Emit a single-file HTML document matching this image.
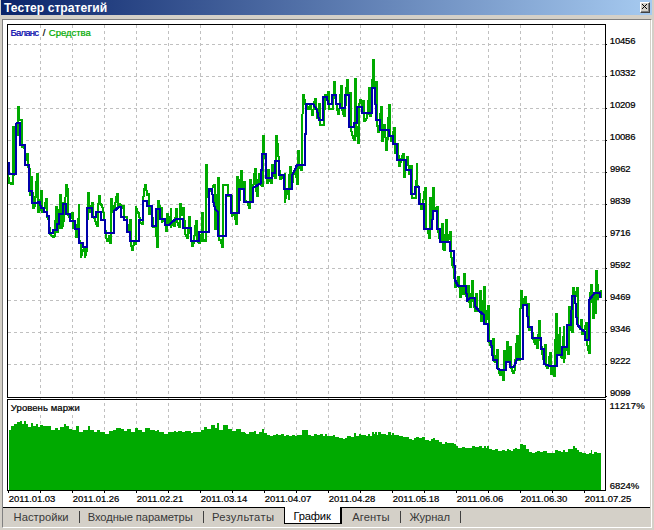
<!DOCTYPE html>
<html lang="ru"><head><meta charset="utf-8"><title>Тестер стратегий</title>
<style>
html,body{margin:0;padding:0}
body{width:654px;height:530px;background:#d4d0c8;position:relative;overflow:hidden;font-family:"Liberation Sans",sans-serif;font-size:11px;color:#000}
div{position:absolute;box-sizing:border-box}
.title{left:1px;top:0;width:651px;height:15px;background:linear-gradient(90deg,#0a246a,#a6caf0)}
.close{left:640px;top:2px;width:10px;height:11px;background:#d4d0c8;border-top:1px solid #fff;border-left:1px solid #fff;border-right:1px solid #404040;border-bottom:1px solid #404040;box-shadow:inset -1px -1px 0 #808080}
.client{left:2px;top:19px;width:650px;height:509px;border-top:1px solid #808080;border-left:1px solid #808080;border-right:1px solid #fff;border-bottom:1px solid #fff;background:#d4d0c8}
.white{left:3px;top:20px;width:647px;height:487px;background:#fff}
.bline{left:3px;top:507px;width:647px;height:1px;background:#000}
.t{white-space:nowrap;line-height:14px;height:14px}
.c{-webkit-text-stroke:0.22px}
.bg{background:#fff}
.sep{top:511px;width:1px;height:12px;background:#404040}
.atab{left:284px;top:507px;width:58px;height:17px;background:#fff;border-left:1px solid #000;border-bottom:1px solid #000;border-right:2px solid #000}
svg{position:absolute;left:0;top:0}
</style></head><body>
<div class="title"></div>
<div class="t" style="left:4.00px;top:0.81px;font-size:12.1px;letter-spacing:0.025px;color:#fff;font-weight:bold;">Тестер стратегий</div>
<div class="close"></div>
<div class="client"></div>
<div class="white"></div>
<div class="bline"></div>
<div class="atab"></div>
<div class="t" style="left:13.62px;top:510.12px;font-size:11.2px;letter-spacing:0.014px;color:#383838;">Настройки</div>
<div class="t" style="left:87.72px;top:510.12px;font-size:11.2px;letter-spacing:-0.097px;color:#383838;">Входные параметры</div>
<div class="t" style="left:211.88px;top:510.12px;font-size:11.2px;letter-spacing:0.349px;color:#383838;">Результаты</div>
<div class="t" style="left:293.43px;top:509.12px;font-size:11.2px;letter-spacing:-0.173px;color:#000;">График</div>
<div class="t" style="left:352.20px;top:510.12px;font-size:11.2px;letter-spacing:0.099px;color:#383838;">Агенты</div>
<div class="t" style="left:409.50px;top:510.12px;font-size:11.2px;letter-spacing:-0.082px;color:#383838;">Журнал</div>
<div class="sep" style="left:79px"></div>
<div class="sep" style="left:203px"></div>
<div class="sep" style="left:400px"></div>
<div class="sep" style="left:460px"></div>
<svg width="654" height="530" viewBox="0 0 654 530" shape-rendering="crispEdges">
<g stroke="#c0c0c0" stroke-width="1" stroke-dasharray="3 3" fill="none">
<line x1="40.5" y1="25" x2="40.5" y2="490"/>
<line x1="72.5" y1="25" x2="72.5" y2="490"/>
<line x1="104.5" y1="25" x2="104.5" y2="490"/>
<line x1="136.5" y1="25" x2="136.5" y2="490"/>
<line x1="168.5" y1="25" x2="168.5" y2="490"/>
<line x1="200.5" y1="25" x2="200.5" y2="490"/>
<line x1="232.5" y1="25" x2="232.5" y2="490"/>
<line x1="264.5" y1="25" x2="264.5" y2="490"/>
<line x1="296.5" y1="25" x2="296.5" y2="490"/>
<line x1="328.5" y1="25" x2="328.5" y2="490"/>
<line x1="360.5" y1="25" x2="360.5" y2="490"/>
<line x1="392.5" y1="25" x2="392.5" y2="490"/>
<line x1="424.5" y1="25" x2="424.5" y2="490"/>
<line x1="456.5" y1="25" x2="456.5" y2="490"/>
<line x1="488.5" y1="25" x2="488.5" y2="490"/>
<line x1="520.5" y1="25" x2="520.5" y2="490"/>
<line x1="552.5" y1="25" x2="552.5" y2="490"/>
<line x1="584.5" y1="25" x2="584.5" y2="490"/>
<line x1="8" y1="44.5" x2="605" y2="44.5"/>
<line x1="8" y1="76.5" x2="605" y2="76.5"/>
<line x1="8" y1="108.5" x2="605" y2="108.5"/>
<line x1="8" y1="140.5" x2="605" y2="140.5"/>
<line x1="8" y1="172.5" x2="605" y2="172.5"/>
<line x1="8" y1="204.5" x2="605" y2="204.5"/>
<line x1="8" y1="236.5" x2="605" y2="236.5"/>
<line x1="8" y1="268.5" x2="605" y2="268.5"/>
<line x1="8" y1="300.5" x2="605" y2="300.5"/>
<line x1="8" y1="332.5" x2="605" y2="332.5"/>
<line x1="8" y1="364.5" x2="605" y2="364.5"/>
</g>
<polygon points="9,490 9,430 11,430 11,426 14,426 14,424 17,424 17,422 20,422 20,421 22,421 22,424 24,424 24,421 26,421 26,424 28,424 28,427 31,427 31,423 33,423 33,426 36,426 36,424 38,424 38,427 40,427 40,425 43,425 43,426 51,426 51,430 55,430 55,428 58,428 58,430 60,430 60,427 64,427 64,424 66,424 66,426 69,426 69,429 72,429 72,430 76,430 76,426 79,426 79,432 83,432 83,430 88,430 88,426 90,426 90,430 94,430 94,432 97,432 97,430 100,430 100,432 105,432 105,434 109,434 109,431 113,431 113,430 116,430 116,428 121,428 121,429 124,429 124,431 127,431 127,429 131,429 131,432 135,432 135,428 138,428 138,430 142,430 142,432 145,432 145,428 150,428 150,430 155,430 155,431 157,431 157,430 159,430 159,432 164,432 164,434 168,434 168,432 174,432 174,431 176,431 176,432 178,432 178,431 182,431 182,432 185,432 185,431 191,431 191,433 193,433 193,432 201,432 201,430 204,430 204,427 207,427 207,429 211,429 211,425 215,425 215,428 217,428 217,423 219,423 219,430 223,430 223,425 228,425 228,429 232,429 232,431 236,431 236,429 241,429 241,432 245,432 245,433 246,433 246,434 249,434 249,432 254,432 254,431 256,431 256,434 259,434 259,432 262,432 262,429 264,429 264,433 267,433 267,435 270,435 270,436 273,436 273,435 276,435 276,434 278,434 278,435 281,435 281,434 284,434 284,436 286,436 286,435 289,435 289,436 292,436 292,435 295,435 295,436 297,436 297,435 302,435 302,430 308,430 308,435 311,435 311,436 314,436 314,434 317,434 317,435 320,435 320,434 323,434 323,436 325,436 325,434 327,434 327,436 330,436 330,436 333,436 333,435 335,435 335,437 339,437 339,438 343,438 343,439 345,439 345,438 347,438 347,436 351,436 351,437 354,437 354,433 356,433 356,436 359,436 359,434 361,434 361,435 364,435 364,435 366,435 366,436 368,436 368,434 370,434 370,436 372,436 372,432 374,432 374,434 375,434 375,432 377,432 377,435 378,435 378,432 381,432 381,434 386,434 386,435 388,435 388,432 391,432 391,435 392,435 392,433 394,433 394,435 399,435 399,436 403,436 403,437 409,437 409,439 412,439 412,440 414,440 414,438 416,438 416,437 419,437 419,438 422,438 422,437 425,437 425,440 429,440 429,441 431,441 431,439 433,439 433,438 435,438 435,440 439,440 439,442 442,442 442,444 445,444 445,442 447,442 447,443 451,443 451,443 454,443 454,444 456,444 456,446 458,446 458,448 462,448 462,447 465,447 465,448 472,448 472,446 475,446 475,447 479,447 479,446 482,446 482,448 484,448 484,446 486,446 486,448 487,448 487,446 489,446 489,449 492,449 492,450 495,450 495,449 498,449 498,451 502,451 502,450 505,450 505,451 507,451 507,449 509,449 509,450 511,450 511,451 513,451 513,449 515,449 515,448 517,448 517,449 520,449 520,444 523,444 523,445 526,445 526,449 529,449 529,452 532,452 532,453 535,453 535,452 537,452 537,451 540,451 540,452 543,452 543,451 545,451 545,451 547,451 547,453 552,453 552,453 555,453 555,450 558,450 558,451 561,451 561,452 563,452 563,450 565,450 565,452 568,452 568,449 571,449 571,449 573,449 573,446 575,446 575,448 577,448 577,450 579,450 579,452 582,452 582,453 586,453 586,454 589,454 589,453 591,453 591,450 592,450 592,454 594,454 594,452 597,452 597,453 601,453 601,490" fill="#00aa00"/>
<g fill="none" stroke="#00aa00" stroke-width="1" stroke-linecap="square">
<polyline transform="translate(-0.5,-0.5)" points="8,172 9,183 13,184 13,127 14,127 14,175 14,127 16,127 18,135 18,107 19,107 19,120 22,120 22,147 25,148 26,160 27,160 27,154 28,154 28,166 30,170 30,195 32,195 32,177 33,208 34,208 35,205 37,174 38,174 38,212 39,212 40,208 41,191 42,191 42,212 44,212 46,199 47,199 47,216 49,220 50,234 53,237 54,237 55,235 56,207 57,207 57,232 58,232 59,225 60,195 61,195 61,228 62,228 63,203 63,226 65,210 66,185 67,185 68,192 68,215 70,218 71,218 72,213 73,213 73,228 74,228 75,225 76,225 76,237 77,237 78,232 79,205 79,240 81,243 81,257 83,250 85,247 85,257 87,250 88,193 89,193 89,212 90,212 92,203 93,203 93,215 95,220 97,226 98,226 98,212 99,196 100,196 100,204 102,205 104,215 106,235 107,241 108,241 109,236 110,236 110,243 111,243 111,199 112,199 113,212 114,212 115,206 117,194 118,194 118,206 119,206 119,204 120,204 122,208 123,208 123,206 124,206 124,217 127,217 128,232 129,232 130,220 131,220 131,242 132,250 133,250 134,242 135,242 136,244 136,207 138,213 139,213 140,222 142,224 143,224 143,200 145,185 146,185 147,195 148,195 148,194 149,194 149,214 150,214 151,207 152,207 153,227 154,227 155,226 156,226 157,247 158,247 158,201 159,201 160,210 161,210 162,208 162,222 164,220 165,220 166,231 167,231 167,214 168,214 169,224 170,224 171,209 171,227 173,222 174,222 174,226 175,226 176,209 177,209 177,221 179,227 180,227 180,204 181,204 182,215 183,215 183,208 184,208 185,233 187,238 188,238 189,217 190,217 190,229 192,246 193,246 194,241 196,221 197,221 197,240 199,243 200,243 200,235 201,235 201,241 202,241 202,213 203,213 203,240 205,241 206,241 206,165 207,165 207,197 208,197 209,192 212,188 214,185 215,185 215,229 216,229 217,212 218,178 219,178 219,208 219,240 221,240 222,247 223,247 223,216 223,185 228,185 228,196 232,196 232,216 234,214 235,214 236,224 237,224 237,177 238,177 238,213 239,213 240,189 241,171 242,171 242,189 243,189 244,182 245,182 245,200 248,203 249,208 250,208 250,180 251,180 251,202 252,202 253,190 255,169 256,169 256,186 257,196 258,196 258,186 259,174 260,174 260,184 262,186 263,186 263,136 264,136 264,154 266,160 267,183 268,183 268,170 269,170 269,178 271,183 272,183 272,165 273,165 273,173 275,178 276,178 276,136 277,136 278,150 279,162 280,179 281,179 283,176 285,174 285,202 287,190 288,190 289,199 289,183 290,167 291,167 291,189 292,189 293,176 295,170 296,170 297,184 298,184 298,151 299,151 299,165 301,170 302,170 302,165 302,134 303,95 304,95 305,103 308,109 309,109 310,104 311,104 312,115 313,115 314,104 315,99 316,99 317,118 318,118 319,104 320,104 320,125 324,125 325,95 326,95 327,97 328,97 328,92 329,92 329,109 333,109 334,82 335,82 335,95 338,114 339,114 340,104 341,86 342,86 342,108 344,116 345,116 346,95 347,80 348,80 348,95 349,95 350,93 351,93 351,130 354,140 355,140 355,79 356,79 356,123 357,130 358,143 359,143 359,107 360,100 361,100 362,107 363,107 363,101 364,101 364,121 365,121 366,120 368,113 369,88 370,88 370,116 371,116 372,100 373,60 374,60 374,88 375,88 376,82 377,82 377,120 378,132 379,132 380,120 381,107 382,107 382,141 383,141 384,125 385,125 386,150 387,150 388,130 389,105 390,105 390,130 391,141 392,141 393,136 394,128 395,128 395,153 396,153 397,144 398,144 398,145 399,166 400,166 401,160 403,154 404,154 404,177 405,177 406,165 407,157 408,157 409,174 410,174 410,170 411,166 412,166 412,198 416,198 417,164 417,185 419,188 421,209 422,209 423,204 425,188 426,188 426,229 428,229 429,238 430,238 430,198 431,198 431,228 432,228 433,188 434,188 434,211 435,211 437,207 438,207 438,229 440,242 441,242 442,224 443,224 443,249 444,250 445,250 446,220 447,220 447,242 448,242 450,232 451,232 451,250 452,264 454,269 455,287 456,287 457,286 458,277 459,277 460,297 461,297 461,286 462,286 463,294 464,294 464,274 465,274 465,286 467,300 468,300 468,286 469,286 469,298 470,307 471,307 472,281 473,281 473,298 475,311 476,311 476,294 477,294 477,310 479,311 480,311 480,291 481,291 481,321 482,321 483,315 484,287 485,287 485,324 486,324 488,306 489,306 489,341 491,347 492,347 493,339 494,339 494,360 495,362 496,362 497,350 498,350 498,368 500,375 501,375 501,370 502,370 503,380 504,380 504,351 505,351 505,370 506,370 507,342 508,342 508,362 509,362 510,347 511,347 511,367 513,373 514,373 515,368 517,336 518,336 518,359 519,360 520,360 520,327 521,291 522,291 523,305 524,305 525,297 526,297 526,305 527,305 528,304 529,304 529,330 530,330 531,327 532,327 533,338 535,344 536,344 536,338 537,338 537,348 538,348 539,321 540,321 540,338 542,349 543,359 544,359 545,345 546,345 546,364 547,368 548,368 550,353 551,353 551,374 552,374 552,366 553,366 554,376 555,376 555,366 556,314 557,314 557,355 558,355 560,328 560,355 562,358 563,358 563,347 564,327 564,362 566,347 567,347 568,354 569,354 569,307 570,307 570,325 572,332 573,332 573,288 574,288 575,296 576,296 577,288 578,288 578,324 580,329 581,329 581,320 582,320 582,334 583,334 584,332 586,323 587,323 587,343 589,353 590,353 590,300 591,285 592,285 593,318 594,318 594,294 595,294 595,313 596,313 596,271 597,271 597,293 598,293 598,284 598,299 600,293 601,291 601,297"/>
<polyline transform="translate(-0.5,0.5)" points="8,172 9,183 13,184 13,127 14,127 14,175 14,127 16,127 18,135 18,107 19,107 19,120 22,120 22,147 25,148 26,160 27,160 27,154 28,154 28,166 30,170 30,195 32,195 32,177 33,208 34,208 35,205 37,174 38,174 38,212 39,212 40,208 41,191 42,191 42,212 44,212 46,199 47,199 47,216 49,220 50,234 53,237 54,237 55,235 56,207 57,207 57,232 58,232 59,225 60,195 61,195 61,228 62,228 63,203 63,226 65,210 66,185 67,185 68,192 68,215 70,218 71,218 72,213 73,213 73,228 74,228 75,225 76,225 76,237 77,237 78,232 79,205 79,240 81,243 81,257 83,250 85,247 85,257 87,250 88,193 89,193 89,212 90,212 92,203 93,203 93,215 95,220 97,226 98,226 98,212 99,196 100,196 100,204 102,205 104,215 106,235 107,241 108,241 109,236 110,236 110,243 111,243 111,199 112,199 113,212 114,212 115,206 117,194 118,194 118,206 119,206 119,204 120,204 122,208 123,208 123,206 124,206 124,217 127,217 128,232 129,232 130,220 131,220 131,242 132,250 133,250 134,242 135,242 136,244 136,207 138,213 139,213 140,222 142,224 143,224 143,200 145,185 146,185 147,195 148,195 148,194 149,194 149,214 150,214 151,207 152,207 153,227 154,227 155,226 156,226 157,247 158,247 158,201 159,201 160,210 161,210 162,208 162,222 164,220 165,220 166,231 167,231 167,214 168,214 169,224 170,224 171,209 171,227 173,222 174,222 174,226 175,226 176,209 177,209 177,221 179,227 180,227 180,204 181,204 182,215 183,215 183,208 184,208 185,233 187,238 188,238 189,217 190,217 190,229 192,246 193,246 194,241 196,221 197,221 197,240 199,243 200,243 200,235 201,235 201,241 202,241 202,213 203,213 203,240 205,241 206,241 206,165 207,165 207,197 208,197 209,192 212,188 214,185 215,185 215,229 216,229 217,212 218,178 219,178 219,208 219,240 221,240 222,247 223,247 223,216 223,185 228,185 228,196 232,196 232,216 234,214 235,214 236,224 237,224 237,177 238,177 238,213 239,213 240,189 241,171 242,171 242,189 243,189 244,182 245,182 245,200 248,203 249,208 250,208 250,180 251,180 251,202 252,202 253,190 255,169 256,169 256,186 257,196 258,196 258,186 259,174 260,174 260,184 262,186 263,186 263,136 264,136 264,154 266,160 267,183 268,183 268,170 269,170 269,178 271,183 272,183 272,165 273,165 273,173 275,178 276,178 276,136 277,136 278,150 279,162 280,179 281,179 283,176 285,174 285,202 287,190 288,190 289,199 289,183 290,167 291,167 291,189 292,189 293,176 295,170 296,170 297,184 298,184 298,151 299,151 299,165 301,170 302,170 302,165 302,134 303,95 304,95 305,103 308,109 309,109 310,104 311,104 312,115 313,115 314,104 315,99 316,99 317,118 318,118 319,104 320,104 320,125 324,125 325,95 326,95 327,97 328,97 328,92 329,92 329,109 333,109 334,82 335,82 335,95 338,114 339,114 340,104 341,86 342,86 342,108 344,116 345,116 346,95 347,80 348,80 348,95 349,95 350,93 351,93 351,130 354,140 355,140 355,79 356,79 356,123 357,130 358,143 359,143 359,107 360,100 361,100 362,107 363,107 363,101 364,101 364,121 365,121 366,120 368,113 369,88 370,88 370,116 371,116 372,100 373,60 374,60 374,88 375,88 376,82 377,82 377,120 378,132 379,132 380,120 381,107 382,107 382,141 383,141 384,125 385,125 386,150 387,150 388,130 389,105 390,105 390,130 391,141 392,141 393,136 394,128 395,128 395,153 396,153 397,144 398,144 398,145 399,166 400,166 401,160 403,154 404,154 404,177 405,177 406,165 407,157 408,157 409,174 410,174 410,170 411,166 412,166 412,198 416,198 417,164 417,185 419,188 421,209 422,209 423,204 425,188 426,188 426,229 428,229 429,238 430,238 430,198 431,198 431,228 432,228 433,188 434,188 434,211 435,211 437,207 438,207 438,229 440,242 441,242 442,224 443,224 443,249 444,250 445,250 446,220 447,220 447,242 448,242 450,232 451,232 451,250 452,264 454,269 455,287 456,287 457,286 458,277 459,277 460,297 461,297 461,286 462,286 463,294 464,294 464,274 465,274 465,286 467,300 468,300 468,286 469,286 469,298 470,307 471,307 472,281 473,281 473,298 475,311 476,311 476,294 477,294 477,310 479,311 480,311 480,291 481,291 481,321 482,321 483,315 484,287 485,287 485,324 486,324 488,306 489,306 489,341 491,347 492,347 493,339 494,339 494,360 495,362 496,362 497,350 498,350 498,368 500,375 501,375 501,370 502,370 503,380 504,380 504,351 505,351 505,370 506,370 507,342 508,342 508,362 509,362 510,347 511,347 511,367 513,373 514,373 515,368 517,336 518,336 518,359 519,360 520,360 520,327 521,291 522,291 523,305 524,305 525,297 526,297 526,305 527,305 528,304 529,304 529,330 530,330 531,327 532,327 533,338 535,344 536,344 536,338 537,338 537,348 538,348 539,321 540,321 540,338 542,349 543,359 544,359 545,345 546,345 546,364 547,368 548,368 550,353 551,353 551,374 552,374 552,366 553,366 554,376 555,376 555,366 556,314 557,314 557,355 558,355 560,328 560,355 562,358 563,358 563,347 564,327 564,362 566,347 567,347 568,354 569,354 569,307 570,307 570,325 572,332 573,332 573,288 574,288 575,296 576,296 577,288 578,288 578,324 580,329 581,329 581,320 582,320 582,334 583,334 584,332 586,323 587,323 587,343 589,353 590,353 590,300 591,285 592,285 593,318 594,318 594,294 595,294 595,313 596,313 596,271 597,271 597,293 598,293 598,284 598,299 600,293 601,291 601,297"/>
<polyline transform="translate(0.5,-0.5)" points="8,172 9,183 13,184 13,127 14,127 14,175 14,127 16,127 18,135 18,107 19,107 19,120 22,120 22,147 25,148 26,160 27,160 27,154 28,154 28,166 30,170 30,195 32,195 32,177 33,208 34,208 35,205 37,174 38,174 38,212 39,212 40,208 41,191 42,191 42,212 44,212 46,199 47,199 47,216 49,220 50,234 53,237 54,237 55,235 56,207 57,207 57,232 58,232 59,225 60,195 61,195 61,228 62,228 63,203 63,226 65,210 66,185 67,185 68,192 68,215 70,218 71,218 72,213 73,213 73,228 74,228 75,225 76,225 76,237 77,237 78,232 79,205 79,240 81,243 81,257 83,250 85,247 85,257 87,250 88,193 89,193 89,212 90,212 92,203 93,203 93,215 95,220 97,226 98,226 98,212 99,196 100,196 100,204 102,205 104,215 106,235 107,241 108,241 109,236 110,236 110,243 111,243 111,199 112,199 113,212 114,212 115,206 117,194 118,194 118,206 119,206 119,204 120,204 122,208 123,208 123,206 124,206 124,217 127,217 128,232 129,232 130,220 131,220 131,242 132,250 133,250 134,242 135,242 136,244 136,207 138,213 139,213 140,222 142,224 143,224 143,200 145,185 146,185 147,195 148,195 148,194 149,194 149,214 150,214 151,207 152,207 153,227 154,227 155,226 156,226 157,247 158,247 158,201 159,201 160,210 161,210 162,208 162,222 164,220 165,220 166,231 167,231 167,214 168,214 169,224 170,224 171,209 171,227 173,222 174,222 174,226 175,226 176,209 177,209 177,221 179,227 180,227 180,204 181,204 182,215 183,215 183,208 184,208 185,233 187,238 188,238 189,217 190,217 190,229 192,246 193,246 194,241 196,221 197,221 197,240 199,243 200,243 200,235 201,235 201,241 202,241 202,213 203,213 203,240 205,241 206,241 206,165 207,165 207,197 208,197 209,192 212,188 214,185 215,185 215,229 216,229 217,212 218,178 219,178 219,208 219,240 221,240 222,247 223,247 223,216 223,185 228,185 228,196 232,196 232,216 234,214 235,214 236,224 237,224 237,177 238,177 238,213 239,213 240,189 241,171 242,171 242,189 243,189 244,182 245,182 245,200 248,203 249,208 250,208 250,180 251,180 251,202 252,202 253,190 255,169 256,169 256,186 257,196 258,196 258,186 259,174 260,174 260,184 262,186 263,186 263,136 264,136 264,154 266,160 267,183 268,183 268,170 269,170 269,178 271,183 272,183 272,165 273,165 273,173 275,178 276,178 276,136 277,136 278,150 279,162 280,179 281,179 283,176 285,174 285,202 287,190 288,190 289,199 289,183 290,167 291,167 291,189 292,189 293,176 295,170 296,170 297,184 298,184 298,151 299,151 299,165 301,170 302,170 302,165 302,134 303,95 304,95 305,103 308,109 309,109 310,104 311,104 312,115 313,115 314,104 315,99 316,99 317,118 318,118 319,104 320,104 320,125 324,125 325,95 326,95 327,97 328,97 328,92 329,92 329,109 333,109 334,82 335,82 335,95 338,114 339,114 340,104 341,86 342,86 342,108 344,116 345,116 346,95 347,80 348,80 348,95 349,95 350,93 351,93 351,130 354,140 355,140 355,79 356,79 356,123 357,130 358,143 359,143 359,107 360,100 361,100 362,107 363,107 363,101 364,101 364,121 365,121 366,120 368,113 369,88 370,88 370,116 371,116 372,100 373,60 374,60 374,88 375,88 376,82 377,82 377,120 378,132 379,132 380,120 381,107 382,107 382,141 383,141 384,125 385,125 386,150 387,150 388,130 389,105 390,105 390,130 391,141 392,141 393,136 394,128 395,128 395,153 396,153 397,144 398,144 398,145 399,166 400,166 401,160 403,154 404,154 404,177 405,177 406,165 407,157 408,157 409,174 410,174 410,170 411,166 412,166 412,198 416,198 417,164 417,185 419,188 421,209 422,209 423,204 425,188 426,188 426,229 428,229 429,238 430,238 430,198 431,198 431,228 432,228 433,188 434,188 434,211 435,211 437,207 438,207 438,229 440,242 441,242 442,224 443,224 443,249 444,250 445,250 446,220 447,220 447,242 448,242 450,232 451,232 451,250 452,264 454,269 455,287 456,287 457,286 458,277 459,277 460,297 461,297 461,286 462,286 463,294 464,294 464,274 465,274 465,286 467,300 468,300 468,286 469,286 469,298 470,307 471,307 472,281 473,281 473,298 475,311 476,311 476,294 477,294 477,310 479,311 480,311 480,291 481,291 481,321 482,321 483,315 484,287 485,287 485,324 486,324 488,306 489,306 489,341 491,347 492,347 493,339 494,339 494,360 495,362 496,362 497,350 498,350 498,368 500,375 501,375 501,370 502,370 503,380 504,380 504,351 505,351 505,370 506,370 507,342 508,342 508,362 509,362 510,347 511,347 511,367 513,373 514,373 515,368 517,336 518,336 518,359 519,360 520,360 520,327 521,291 522,291 523,305 524,305 525,297 526,297 526,305 527,305 528,304 529,304 529,330 530,330 531,327 532,327 533,338 535,344 536,344 536,338 537,338 537,348 538,348 539,321 540,321 540,338 542,349 543,359 544,359 545,345 546,345 546,364 547,368 548,368 550,353 551,353 551,374 552,374 552,366 553,366 554,376 555,376 555,366 556,314 557,314 557,355 558,355 560,328 560,355 562,358 563,358 563,347 564,327 564,362 566,347 567,347 568,354 569,354 569,307 570,307 570,325 572,332 573,332 573,288 574,288 575,296 576,296 577,288 578,288 578,324 580,329 581,329 581,320 582,320 582,334 583,334 584,332 586,323 587,323 587,343 589,353 590,353 590,300 591,285 592,285 593,318 594,318 594,294 595,294 595,313 596,313 596,271 597,271 597,293 598,293 598,284 598,299 600,293 601,291 601,297"/>
<polyline transform="translate(0.5,0.5)" points="8,172 9,183 13,184 13,127 14,127 14,175 14,127 16,127 18,135 18,107 19,107 19,120 22,120 22,147 25,148 26,160 27,160 27,154 28,154 28,166 30,170 30,195 32,195 32,177 33,208 34,208 35,205 37,174 38,174 38,212 39,212 40,208 41,191 42,191 42,212 44,212 46,199 47,199 47,216 49,220 50,234 53,237 54,237 55,235 56,207 57,207 57,232 58,232 59,225 60,195 61,195 61,228 62,228 63,203 63,226 65,210 66,185 67,185 68,192 68,215 70,218 71,218 72,213 73,213 73,228 74,228 75,225 76,225 76,237 77,237 78,232 79,205 79,240 81,243 81,257 83,250 85,247 85,257 87,250 88,193 89,193 89,212 90,212 92,203 93,203 93,215 95,220 97,226 98,226 98,212 99,196 100,196 100,204 102,205 104,215 106,235 107,241 108,241 109,236 110,236 110,243 111,243 111,199 112,199 113,212 114,212 115,206 117,194 118,194 118,206 119,206 119,204 120,204 122,208 123,208 123,206 124,206 124,217 127,217 128,232 129,232 130,220 131,220 131,242 132,250 133,250 134,242 135,242 136,244 136,207 138,213 139,213 140,222 142,224 143,224 143,200 145,185 146,185 147,195 148,195 148,194 149,194 149,214 150,214 151,207 152,207 153,227 154,227 155,226 156,226 157,247 158,247 158,201 159,201 160,210 161,210 162,208 162,222 164,220 165,220 166,231 167,231 167,214 168,214 169,224 170,224 171,209 171,227 173,222 174,222 174,226 175,226 176,209 177,209 177,221 179,227 180,227 180,204 181,204 182,215 183,215 183,208 184,208 185,233 187,238 188,238 189,217 190,217 190,229 192,246 193,246 194,241 196,221 197,221 197,240 199,243 200,243 200,235 201,235 201,241 202,241 202,213 203,213 203,240 205,241 206,241 206,165 207,165 207,197 208,197 209,192 212,188 214,185 215,185 215,229 216,229 217,212 218,178 219,178 219,208 219,240 221,240 222,247 223,247 223,216 223,185 228,185 228,196 232,196 232,216 234,214 235,214 236,224 237,224 237,177 238,177 238,213 239,213 240,189 241,171 242,171 242,189 243,189 244,182 245,182 245,200 248,203 249,208 250,208 250,180 251,180 251,202 252,202 253,190 255,169 256,169 256,186 257,196 258,196 258,186 259,174 260,174 260,184 262,186 263,186 263,136 264,136 264,154 266,160 267,183 268,183 268,170 269,170 269,178 271,183 272,183 272,165 273,165 273,173 275,178 276,178 276,136 277,136 278,150 279,162 280,179 281,179 283,176 285,174 285,202 287,190 288,190 289,199 289,183 290,167 291,167 291,189 292,189 293,176 295,170 296,170 297,184 298,184 298,151 299,151 299,165 301,170 302,170 302,165 302,134 303,95 304,95 305,103 308,109 309,109 310,104 311,104 312,115 313,115 314,104 315,99 316,99 317,118 318,118 319,104 320,104 320,125 324,125 325,95 326,95 327,97 328,97 328,92 329,92 329,109 333,109 334,82 335,82 335,95 338,114 339,114 340,104 341,86 342,86 342,108 344,116 345,116 346,95 347,80 348,80 348,95 349,95 350,93 351,93 351,130 354,140 355,140 355,79 356,79 356,123 357,130 358,143 359,143 359,107 360,100 361,100 362,107 363,107 363,101 364,101 364,121 365,121 366,120 368,113 369,88 370,88 370,116 371,116 372,100 373,60 374,60 374,88 375,88 376,82 377,82 377,120 378,132 379,132 380,120 381,107 382,107 382,141 383,141 384,125 385,125 386,150 387,150 388,130 389,105 390,105 390,130 391,141 392,141 393,136 394,128 395,128 395,153 396,153 397,144 398,144 398,145 399,166 400,166 401,160 403,154 404,154 404,177 405,177 406,165 407,157 408,157 409,174 410,174 410,170 411,166 412,166 412,198 416,198 417,164 417,185 419,188 421,209 422,209 423,204 425,188 426,188 426,229 428,229 429,238 430,238 430,198 431,198 431,228 432,228 433,188 434,188 434,211 435,211 437,207 438,207 438,229 440,242 441,242 442,224 443,224 443,249 444,250 445,250 446,220 447,220 447,242 448,242 450,232 451,232 451,250 452,264 454,269 455,287 456,287 457,286 458,277 459,277 460,297 461,297 461,286 462,286 463,294 464,294 464,274 465,274 465,286 467,300 468,300 468,286 469,286 469,298 470,307 471,307 472,281 473,281 473,298 475,311 476,311 476,294 477,294 477,310 479,311 480,311 480,291 481,291 481,321 482,321 483,315 484,287 485,287 485,324 486,324 488,306 489,306 489,341 491,347 492,347 493,339 494,339 494,360 495,362 496,362 497,350 498,350 498,368 500,375 501,375 501,370 502,370 503,380 504,380 504,351 505,351 505,370 506,370 507,342 508,342 508,362 509,362 510,347 511,347 511,367 513,373 514,373 515,368 517,336 518,336 518,359 519,360 520,360 520,327 521,291 522,291 523,305 524,305 525,297 526,297 526,305 527,305 528,304 529,304 529,330 530,330 531,327 532,327 533,338 535,344 536,344 536,338 537,338 537,348 538,348 539,321 540,321 540,338 542,349 543,359 544,359 545,345 546,345 546,364 547,368 548,368 550,353 551,353 551,374 552,374 552,366 553,366 554,376 555,376 555,366 556,314 557,314 557,355 558,355 560,328 560,355 562,358 563,358 563,347 564,327 564,362 566,347 567,347 568,354 569,354 569,307 570,307 570,325 572,332 573,332 573,288 574,288 575,296 576,296 577,288 578,288 578,324 580,329 581,329 581,320 582,320 582,334 583,334 584,332 586,323 587,323 587,343 589,353 590,353 590,300 591,285 592,285 593,318 594,318 594,294 595,294 595,313 596,313 596,271 597,271 597,293 598,293 598,284 598,299 600,293 601,291 601,297"/>
</g>
<g fill="none" stroke="#0000aa" stroke-width="1" stroke-linecap="square">
<polyline transform="translate(-0.5,-0.5)" points="8,163 9,163 9,174 16,174 16,124 17,123 20,123 20,145 25,145 25,165 29,165 29,191 32,191 32,203 38,203 38,202 40,202 41,208 44,208 44,212 47,212 47,216 49,216 49,233 53,233 53,230 57,230 57,224 59,224 59,214 63,214 63,204 66,204 66,214 70,214 70,221 75,221 75,229 79,229 79,243 83,243 83,247 87,247 87,208 92,208 92,217 96,217 96,212 101,212 101,220 105,220 105,233 114,233 114,211 119,207 121,207 121,217 124,217 124,220 127,220 127,232 130,232 130,241 139,241 139,220 143,220 143,201 147,201 147,206 152,206 152,226 156,226 156,209 160,209 160,219 165,219 165,225 169,225 172,222 176,219 183,219 183,228 191,228 191,241 199,241 199,232 209,232 209,189 212,189 213,200 215,209 218,212 218,236 226,236 226,195 231,195 231,213 239,213 239,189 244,189 244,202 253,202 253,188 261,183 261,170 262,170 262,154 266,154 266,178 272,178 272,173 275,173 275,161 279,161 279,175 284,175 284,189 292,189 292,176 297,165 305,165 305,134 306,134 306,104 313,104 317,110 319,120 323,120 323,97 327,97 328,104 332,104 332,95 336,95 336,104 340,104 340,108 345,108 345,95 349,95 349,127 354,127 354,123 357,123 357,107 362,107 362,113 372,113 372,88 375,88 376,120 380,120 380,130 389,130 389,136 393,136 393,144 397,144 397,160 406,160 406,170 411,170 411,194 415,194 415,187 419,187 419,204 424,204 424,229 432,229 433,211 437,211 437,229 440,229 440,242 450,242 450,251 454,251 455,280 458,286 466,286 467,301 470,298 475,298 475,306 479,311 484,315 484,324 488,324 488,341 491,341 493,360 497,360 497,368 500,370 506,370 506,362 510,362 510,367 514,367 517,359 523,359 523,305 527,305 528,327 532,327 532,338 541,338 541,349 544,349 544,364 550,366 557,366 557,355 562,355 562,347 567,347 567,325 571,325 572,296 575,296 577,324 581,329 585,332 585,340 589,340 589,300 594,294 594,293 600,293 600,297"/>
<polyline transform="translate(-0.5,0.5)" points="8,163 9,163 9,174 16,174 16,124 17,123 20,123 20,145 25,145 25,165 29,165 29,191 32,191 32,203 38,203 38,202 40,202 41,208 44,208 44,212 47,212 47,216 49,216 49,233 53,233 53,230 57,230 57,224 59,224 59,214 63,214 63,204 66,204 66,214 70,214 70,221 75,221 75,229 79,229 79,243 83,243 83,247 87,247 87,208 92,208 92,217 96,217 96,212 101,212 101,220 105,220 105,233 114,233 114,211 119,207 121,207 121,217 124,217 124,220 127,220 127,232 130,232 130,241 139,241 139,220 143,220 143,201 147,201 147,206 152,206 152,226 156,226 156,209 160,209 160,219 165,219 165,225 169,225 172,222 176,219 183,219 183,228 191,228 191,241 199,241 199,232 209,232 209,189 212,189 213,200 215,209 218,212 218,236 226,236 226,195 231,195 231,213 239,213 239,189 244,189 244,202 253,202 253,188 261,183 261,170 262,170 262,154 266,154 266,178 272,178 272,173 275,173 275,161 279,161 279,175 284,175 284,189 292,189 292,176 297,165 305,165 305,134 306,134 306,104 313,104 317,110 319,120 323,120 323,97 327,97 328,104 332,104 332,95 336,95 336,104 340,104 340,108 345,108 345,95 349,95 349,127 354,127 354,123 357,123 357,107 362,107 362,113 372,113 372,88 375,88 376,120 380,120 380,130 389,130 389,136 393,136 393,144 397,144 397,160 406,160 406,170 411,170 411,194 415,194 415,187 419,187 419,204 424,204 424,229 432,229 433,211 437,211 437,229 440,229 440,242 450,242 450,251 454,251 455,280 458,286 466,286 467,301 470,298 475,298 475,306 479,311 484,315 484,324 488,324 488,341 491,341 493,360 497,360 497,368 500,370 506,370 506,362 510,362 510,367 514,367 517,359 523,359 523,305 527,305 528,327 532,327 532,338 541,338 541,349 544,349 544,364 550,366 557,366 557,355 562,355 562,347 567,347 567,325 571,325 572,296 575,296 577,324 581,329 585,332 585,340 589,340 589,300 594,294 594,293 600,293 600,297"/>
<polyline transform="translate(0.5,-0.5)" points="8,163 9,163 9,174 16,174 16,124 17,123 20,123 20,145 25,145 25,165 29,165 29,191 32,191 32,203 38,203 38,202 40,202 41,208 44,208 44,212 47,212 47,216 49,216 49,233 53,233 53,230 57,230 57,224 59,224 59,214 63,214 63,204 66,204 66,214 70,214 70,221 75,221 75,229 79,229 79,243 83,243 83,247 87,247 87,208 92,208 92,217 96,217 96,212 101,212 101,220 105,220 105,233 114,233 114,211 119,207 121,207 121,217 124,217 124,220 127,220 127,232 130,232 130,241 139,241 139,220 143,220 143,201 147,201 147,206 152,206 152,226 156,226 156,209 160,209 160,219 165,219 165,225 169,225 172,222 176,219 183,219 183,228 191,228 191,241 199,241 199,232 209,232 209,189 212,189 213,200 215,209 218,212 218,236 226,236 226,195 231,195 231,213 239,213 239,189 244,189 244,202 253,202 253,188 261,183 261,170 262,170 262,154 266,154 266,178 272,178 272,173 275,173 275,161 279,161 279,175 284,175 284,189 292,189 292,176 297,165 305,165 305,134 306,134 306,104 313,104 317,110 319,120 323,120 323,97 327,97 328,104 332,104 332,95 336,95 336,104 340,104 340,108 345,108 345,95 349,95 349,127 354,127 354,123 357,123 357,107 362,107 362,113 372,113 372,88 375,88 376,120 380,120 380,130 389,130 389,136 393,136 393,144 397,144 397,160 406,160 406,170 411,170 411,194 415,194 415,187 419,187 419,204 424,204 424,229 432,229 433,211 437,211 437,229 440,229 440,242 450,242 450,251 454,251 455,280 458,286 466,286 467,301 470,298 475,298 475,306 479,311 484,315 484,324 488,324 488,341 491,341 493,360 497,360 497,368 500,370 506,370 506,362 510,362 510,367 514,367 517,359 523,359 523,305 527,305 528,327 532,327 532,338 541,338 541,349 544,349 544,364 550,366 557,366 557,355 562,355 562,347 567,347 567,325 571,325 572,296 575,296 577,324 581,329 585,332 585,340 589,340 589,300 594,294 594,293 600,293 600,297"/>
<polyline transform="translate(0.5,0.5)" points="8,163 9,163 9,174 16,174 16,124 17,123 20,123 20,145 25,145 25,165 29,165 29,191 32,191 32,203 38,203 38,202 40,202 41,208 44,208 44,212 47,212 47,216 49,216 49,233 53,233 53,230 57,230 57,224 59,224 59,214 63,214 63,204 66,204 66,214 70,214 70,221 75,221 75,229 79,229 79,243 83,243 83,247 87,247 87,208 92,208 92,217 96,217 96,212 101,212 101,220 105,220 105,233 114,233 114,211 119,207 121,207 121,217 124,217 124,220 127,220 127,232 130,232 130,241 139,241 139,220 143,220 143,201 147,201 147,206 152,206 152,226 156,226 156,209 160,209 160,219 165,219 165,225 169,225 172,222 176,219 183,219 183,228 191,228 191,241 199,241 199,232 209,232 209,189 212,189 213,200 215,209 218,212 218,236 226,236 226,195 231,195 231,213 239,213 239,189 244,189 244,202 253,202 253,188 261,183 261,170 262,170 262,154 266,154 266,178 272,178 272,173 275,173 275,161 279,161 279,175 284,175 284,189 292,189 292,176 297,165 305,165 305,134 306,134 306,104 313,104 317,110 319,120 323,120 323,97 327,97 328,104 332,104 332,95 336,95 336,104 340,104 340,108 345,108 345,95 349,95 349,127 354,127 354,123 357,123 357,107 362,107 362,113 372,113 372,88 375,88 376,120 380,120 380,130 389,130 389,136 393,136 393,144 397,144 397,160 406,160 406,170 411,170 411,194 415,194 415,187 419,187 419,204 424,204 424,229 432,229 433,211 437,211 437,229 440,229 440,242 450,242 450,251 454,251 455,280 458,286 466,286 467,301 470,298 475,298 475,306 479,311 484,315 484,324 488,324 488,341 491,341 493,360 497,360 497,368 500,370 506,370 506,362 510,362 510,367 514,367 517,359 523,359 523,305 527,305 528,327 532,327 532,338 541,338 541,349 544,349 544,364 550,366 557,366 557,355 562,355 562,347 567,347 567,325 571,325 572,296 575,296 577,324 581,329 585,332 585,340 589,340 589,300 594,294 594,293 600,293 600,297"/>
</g>
<g fill="none" stroke="#000" stroke-width="1">
<rect x="7.5" y="24.5" width="598" height="373"/>
<rect x="7.5" y="399.5" width="598" height="91"/>
</g>
<g fill="#000">
<rect x="606" y="44" width="1" height="1"/>
<rect x="606" y="76" width="1" height="1"/>
<rect x="606" y="108" width="1" height="1"/>
<rect x="606" y="140" width="1" height="1"/>
<rect x="606" y="172" width="1" height="1"/>
<rect x="606" y="204" width="1" height="1"/>
<rect x="606" y="236" width="1" height="1"/>
<rect x="606" y="268" width="1" height="1"/>
<rect x="606" y="300" width="1" height="1"/>
<rect x="606" y="332" width="1" height="1"/>
<rect x="606" y="364" width="1" height="1"/>
<rect x="606" y="396" width="1" height="1"/>
<rect x="8" y="491" width="1" height="2"/>
<rect x="40" y="491" width="1" height="2"/>
<rect x="72" y="491" width="1" height="2"/>
<rect x="104" y="491" width="1" height="2"/>
<rect x="136" y="491" width="1" height="2"/>
<rect x="168" y="491" width="1" height="2"/>
<rect x="200" y="491" width="1" height="2"/>
<rect x="232" y="491" width="1" height="2"/>
<rect x="264" y="491" width="1" height="2"/>
<rect x="296" y="491" width="1" height="2"/>
<rect x="328" y="491" width="1" height="2"/>
<rect x="360" y="491" width="1" height="2"/>
<rect x="392" y="491" width="1" height="2"/>
<rect x="424" y="491" width="1" height="2"/>
<rect x="456" y="491" width="1" height="2"/>
<rect x="488" y="491" width="1" height="2"/>
<rect x="520" y="491" width="1" height="2"/>
<rect x="552" y="491" width="1" height="2"/>
<rect x="584" y="491" width="1" height="2"/>
</g>
<g stroke="#000" stroke-width="1" stroke-linecap="round" shape-rendering="auto"><line x1="642.3" y1="4.3" x2="646.7" y2="8.7"/><line x1="646.7" y1="4.3" x2="642.3" y2="8.7"/></g>
</svg>
<div class="bg" style="left:10px;top:28px;width:82px;height:9px"></div>
<div class="bg" style="left:10px;top:402px;width:71px;height:10px"></div>
<div class="t c" style="left:10.56px;top:25.71px;font-size:9.5px;letter-spacing:-0.790px;color:#0000aa;">Баланс</div>
<div class="t c" style="left:42.70px;top:25.71px;font-size:9.5px;letter-spacing:0.000px;color:#000;">/</div>
<div class="t c" style="left:48.85px;top:25.71px;font-size:9.5px;letter-spacing:-0.015px;color:#00aa00;">Средства</div>
<div class="t c" style="left:10.85px;top:400.71px;font-size:9.5px;letter-spacing:0.076px;color:#000;">Уровень маржи</div>
<div class="t c" style="left:609.81px;top:33.71px;font-size:9.5px;letter-spacing:-0.185px;color:#000;">10456</div>
<div class="t c" style="left:609.81px;top:65.71px;font-size:9.5px;letter-spacing:-0.185px;color:#000;">10332</div>
<div class="t c" style="left:609.81px;top:97.71px;font-size:9.5px;letter-spacing:-0.185px;color:#000;">10209</div>
<div class="t c" style="left:609.81px;top:129.71px;font-size:9.5px;letter-spacing:-0.185px;color:#000;">10086</div>
<div class="t c" style="left:609.95px;top:161.71px;font-size:9.5px;letter-spacing:-0.168px;color:#000;">9962</div>
<div class="t c" style="left:609.95px;top:193.71px;font-size:9.5px;letter-spacing:-0.168px;color:#000;">9839</div>
<div class="t c" style="left:609.95px;top:225.71px;font-size:9.5px;letter-spacing:-0.168px;color:#000;">9716</div>
<div class="t c" style="left:609.95px;top:257.71px;font-size:9.5px;letter-spacing:-0.168px;color:#000;">9592</div>
<div class="t c" style="left:609.95px;top:289.71px;font-size:9.5px;letter-spacing:-0.168px;color:#000;">9469</div>
<div class="t c" style="left:609.95px;top:321.71px;font-size:9.5px;letter-spacing:-0.168px;color:#000;">9346</div>
<div class="t c" style="left:609.95px;top:353.71px;font-size:9.5px;letter-spacing:-0.168px;color:#000;">9222</div>
<div class="t c" style="left:609.95px;top:385.71px;font-size:9.5px;letter-spacing:-0.168px;color:#000;">9099</div>
<div class="t c" style="left:609.61px;top:398.71px;font-size:9.5px;letter-spacing:0.204px;color:#000;">11217%</div>
<div class="t c" style="left:609.75px;top:478.71px;font-size:9.5px;letter-spacing:-0.013px;color:#000;">6824%</div>
<div class="t c" style="left:8.85px;top:491.71px;font-size:9.5px;letter-spacing:-0.035px;color:#000;">2011.01.03</div>
<div class="t c" style="left:72.85px;top:491.71px;font-size:9.5px;letter-spacing:-0.035px;color:#000;">2011.01.26</div>
<div class="t c" style="left:136.85px;top:491.71px;font-size:9.5px;letter-spacing:-0.035px;color:#000;">2011.02.21</div>
<div class="t c" style="left:200.85px;top:491.71px;font-size:9.5px;letter-spacing:-0.051px;color:#000;">2011.03.14</div>
<div class="t c" style="left:264.85px;top:491.71px;font-size:9.5px;letter-spacing:-0.035px;color:#000;">2011.04.07</div>
<div class="t c" style="left:328.85px;top:491.71px;font-size:9.5px;letter-spacing:-0.035px;color:#000;">2011.04.28</div>
<div class="t c" style="left:392.85px;top:491.71px;font-size:9.5px;letter-spacing:-0.035px;color:#000;">2011.05.18</div>
<div class="t c" style="left:456.85px;top:491.71px;font-size:9.5px;letter-spacing:-0.035px;color:#000;">2011.06.06</div>
<div class="t c" style="left:520.85px;top:491.71px;font-size:9.5px;letter-spacing:-0.051px;color:#000;">2011.06.30</div>
<div class="t c" style="left:584.85px;top:491.71px;font-size:9.5px;letter-spacing:-0.035px;color:#000;">2011.07.25</div>
</body></html>
